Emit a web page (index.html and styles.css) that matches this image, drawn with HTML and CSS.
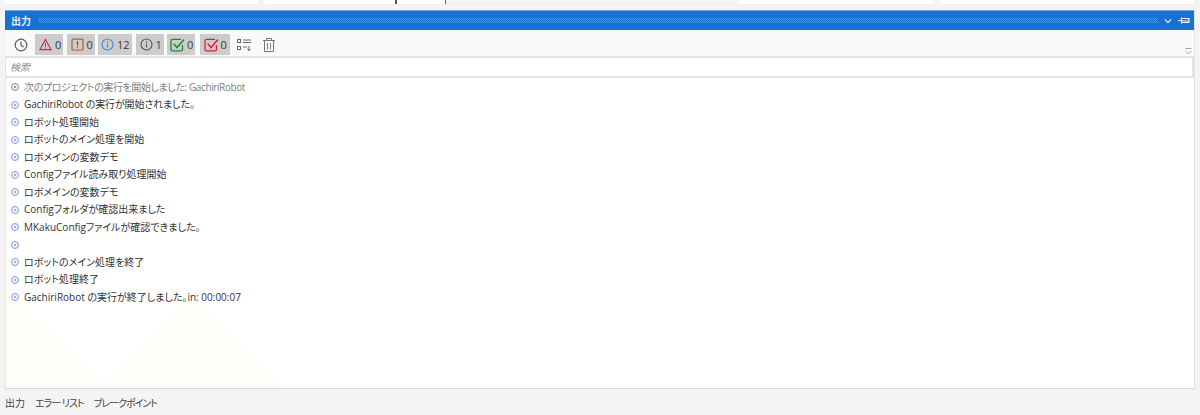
FILE: index.html
```html
<!DOCTYPE html>
<html lang="ja">
<head>
<meta charset="utf-8">
<title>出力</title>
<link rel="stylesheet" href="styles.css">
</head>
<body>
<div class="topstrip">
  <div class="tp tp1"></div>
  <div class="tp tp2"><i class="tick t1"></i><i class="tick t2"></i></div>
  <div class="tp tp3"></div>
  <div class="tp tp4"></div>
  <div class="tp tp5"></div>
</div>
<main class="panel">
  <header class="titlebar">
    <span class="title">出力</span>
    <span class="grip"></span>
    <svg class="tb-icon chev" width="10" height="10" viewBox="0 0 10 10"><path d="M2 3.5 5 6.500l3-3" fill="none" stroke="#d5e6fa" stroke-width="1.3"/></svg>
    <svg class="tb-icon pin" width="12" height="10" viewBox="0 0 12 10"><path d="M0 4.5h3M3.5 1.5v6M3.5 2.5h7.5v4H3.5M3.5 5h7.5" fill="none" stroke="#e3eefc" stroke-width="1.2"/></svg>
  </header>
  <div class="toolbar">
    <svg class="tool clock" width="16" height="16" viewBox="0 0 16 16"><circle cx="8" cy="8" r="5.8" fill="none" stroke="#5c5c5c" stroke-width="1.2"/><path d="M8 4.4V8l2.6 2" fill="none" stroke="#5c5c5c" stroke-width="1.2"/></svg>
    <div class="chip c1"><svg class="sym" viewBox="0 0 14 14"><path d="M7 1.500 13 12.500H1Z" fill="none" stroke="#e0203f" stroke-width="1.200"/><path d="M7 5.300v4M7 10.200v1.100" stroke="#e0203f" stroke-width="1"/></svg><span>0</span></div>
    <div class="chip c2"><svg class="sym" viewBox="0 0 14 14"><rect x="1.100" y="1.100" width="11.800" height="11.800" rx="1" fill="none" stroke="#b5651d" stroke-width="1.300"/><path d="M7 3.500v4.700M7 9.200v1.300" stroke="#7a4a1a" stroke-width="1.300"/></svg><span>0</span></div>
    <div class="chip c3"><svg class="sym" viewBox="0 0 14 14"><circle cx="7" cy="7" r="5.900" fill="none" stroke="#4a7fe0" stroke-width="1.200"/><path d="M7 6v4.200M7 3.600v1.200" stroke="#4a7fe0" stroke-width="1.200"/></svg><span>12</span></div>
    <div class="chip c4"><svg class="sym" viewBox="0 0 14 14"><circle cx="7" cy="7" r="5.900" fill="none" stroke="#555" stroke-width="1.200"/><path d="M7 6v4.200M7 3.600v1.200" stroke="#555" stroke-width="1.200"/></svg><span>1</span></div>
    <div class="chip c5"><svg class="check" width="15" height="14" viewBox="0 0 15 14"><path d="M12.500 7v4.200a1.700 1.700 0 0 1-1.700 1.700H2.700A1.700 1.700 0 0 1 1 11.200V3a1.700 1.700 0 0 1 1.700-1.700H11" fill="none" stroke="#1e8a2d" stroke-width="1.300"/><path d="M3.800 5.800 7 9.600 14 1.500" fill="none" stroke="#1e8a2d" stroke-width="1.500"/></svg><span>0</span></div>
    <div class="chip c6"><svg class="check" width="15" height="14" viewBox="0 0 15 14"><path d="M12.500 7v4.200a1.700 1.700 0 0 1-1.700 1.700H2.700A1.700 1.700 0 0 1 1 11.200V3a1.700 1.700 0 0 1 1.700-1.700H11" fill="none" stroke="#e0203f" stroke-width="1.300"/><path d="M3.800 5.800 7 9.600 14 1.500" fill="none" stroke="#e0203f" stroke-width="1.500"/></svg><span>0</span></div>
    <svg class="tool list-ic" width="16" height="16" viewBox="0 0 16 16"><g fill="none" stroke="#666" stroke-width="1"><rect x="1.500" y="2.500" width="3" height="3"/><rect x="1.500" y="9.500" width="3" height="3"/><path d="M7 3h8M7 5.500h8M7 10h4"/><path d="M13 9v4.500M11.300 12l1.700 1.700 1.700-1.700"/></g></svg>
    <svg class="tool trash" width="14" height="16" viewBox="0 0 14 16"><g fill="none" stroke="#777" stroke-width="1"><path d="M1 3.500h12M4.500 3.500V1.500h5v2M2.500 3.500v11h9v-11M5.500 6v6.500M8.500 6v6.500"/></g></svg>
    <svg class="overflow" width="9" height="9" viewBox="0 0 9 9"><path d="M1.500 1.500h6M1.500 4 4.500 7 7.500 4" fill="none" stroke="#a8a8a8" stroke-width="1"/></svg>
  </div>
  <div class="search">検索</div>
  <div class="log">
    <svg class="watermark" width="300" height="95" viewBox="0 0 300 95"><path d="M0 0 L100 93 L187 3 L275 93 V95 H0Z" fill="#fefdfa"/></svg>
    <div class="row muted"><i class="dot gray"></i>次のプロジェクトの実行を開始しました: GachiriRobot</div>
    <div class="row tight"><i class="dot"></i>GachiriRobot の実行が開始されました。</div>
    <div class="row"><i class="dot"></i>ロボット処理開始</div>
    <div class="row"><i class="dot"></i>ロボットのメイン処理を開始</div>
    <div class="row"><i class="dot"></i>ロボメインの変数デモ</div>
    <div class="row"><i class="dot"></i>Configファイル読み取り処理開始</div>
    <div class="row"><i class="dot"></i>ロボメインの変数デモ</div>
    <div class="row"><i class="dot"></i>Configフォルダが確認出来ました</div>
    <div class="row"><i class="dot"></i>MKakuConfigファイルが確認できました。</div>
    <div class="row"><i class="dot"></i></div>
    <div class="row"><i class="dot"></i>ロボットのメイン処理を終了</div>
    <div class="row"><i class="dot"></i>ロボット処理終了</div>
    <div class="row"><i class="dot"></i>GachiriRobot の実行が終了しました。in: 00:00:07</div>
  </div>
</main>
<nav class="tabs">
  <span class="tab">出力</span>
  <span class="tab narrow">エラー リスト</span>
  <span class="tab narrow">ブレークポイント</span>
</nav>
</body>
</html>
```
FILE: styles.css
```css
* { box-sizing: border-box; }
html, body { margin: 0; height: 100%; }
body {
  width: 1200px;
  height: 415px;
  overflow: hidden;
  background: #f4f4f4;
  font-family: "Open Sans", "Noto Sans CJK JP", sans-serif;
  font-size: 10px;
  font-feature-settings: "palt";
  color: #3a3a3a;
  display: flex;
  flex-direction: column;
}
.topstrip { height: 10px; flex: 0 0 auto; display: flex; padding-left: 5px; }
.tp { height: 5px; background: #fff; border-bottom: 1px solid #eee; position: relative; flex: 0 0 auto; }
.tp1 { width: 253px; margin-right: 7px; }
.tp2 { width: 181px; }
.tp3 { width: 292px; background: #f5f5f5; margin-right: 1px; }
.tp4 { width: 194px; margin-right: 7px; }
.tp5 { width: 254px; }
.tick { position: absolute; top: 0; width: 2px; height: 4px; background: #555; }
.t1 { left: 130px; }
.t2 { left: 180px; background: #4a5fb0; }
.panel {
  margin: 0 5px;
  height: 379px;
  display: flex;
  flex-direction: column;
  flex: 0 0 auto;
  border-right: 1px solid #e2e2e2;
}
.titlebar {
  height: 20px;
  background: #1872d3;
  border-top: 1px solid #6ea5e2;
  display: flex;
  align-items: center;
  padding: 0 4px 0 6px;
  color: #e9f2fc;
  flex: 0 0 auto;
}
.title { font-size: 10px; font-weight: 700; margin-right: 7px; line-height: 1; }
.grip {
  flex: 1;
  height: 5px;
  margin-right: 5px;
  background-image: repeating-conic-gradient(#4a92df 0 25%, #1872d3 0 50%);
  background-size: 2px 2px;
}
.tb-icon { flex: 0 0 auto; display: block; }
.chev { margin-right: 5px; margin-top: 1px; }
.toolbar {
  height: 26px;
  background: #f9f9f9;
  display: flex;
  align-items: center;
  gap: 3.5px;
  padding: 3px 0 0 8px;
  position: relative;
  flex: 0 0 auto;
}
.tool { flex: 0 0 auto; display: block; }
.clock { margin-right: 2.5px; }
.chip {
  height: 21px;
  background: #cccccc;
  display: flex;
  align-items: center;
  gap: 3px;
  padding: 0 0 0 4px;
  font-size: 11px;
  color: #3a3a3a;
  flex: 0 0 auto;
}
.sym { width: 13px; height: 13px; flex: 0 0 auto; }
.check { flex: 0 0 auto; }
.c1, .c2, .c4, .c5 { width: 28px; }
.c3 { width: 34px; padding-left: 3px; }
.c5 { padding-left: 3px; gap: 2px; }
.c6 { width: 30px; margin-left: 1px; gap: 2px; }
.list-ic { margin-left: 3px; }
.trash { margin-left: 6px; }
.overflow { position: absolute; right: 1px; bottom: 0; }
.search {
  height: 22px;
  background: #fff;
  border: 1px solid #e3e3e3;
  border-width: 2px 2px 2px 1px;
  padding-left: 4px;
  font-size: 10px;
  font-style: italic;
  line-height: 18px;
  color: #8f8f8f;
  flex: 0 0 auto;
}
.log {
  flex: 1;
  min-height: 0;
  background: #fff;
  position: relative;
  border-left: 1px solid #e6e6e6;
  border-bottom: 1px solid #d8d8d8;
  overflow: hidden;
  padding-top: 0.5px;
}
.watermark { position: absolute; left: 0; bottom: 0; display: block; }
.row {
  position: relative;
  height: 17.5px;
  line-height: 17.5px;
  display: flex;
  align-items: center;
  gap: 5px;
  padding-left: 5px;
  white-space: pre;
  color: #333;
}
.muted { color: #808080; letter-spacing: -0.4px; }
.tight { letter-spacing: -0.13px; }
.dot {
  width: 8px;
  height: 8px;
  border-radius: 50%;
  border: 1px solid #7f9fe0;
  background: radial-gradient(circle, #9db5e8 0 1px, #eef2fc 1.5px);
  flex: 0 0 auto;
}
.dot.gray { border-color: #8a8a8a; background: radial-gradient(circle, #a0a0a0 0 1px, #efefef 1.5px); }
.tabs {
  flex: 1;
  display: flex;
  gap: 10px;
  padding: 4px 0 0 5px;
  font-size: 10px;
  color: #444;
}
.tab { line-height: 20px; }
.narrow { letter-spacing: -1px; }
```
